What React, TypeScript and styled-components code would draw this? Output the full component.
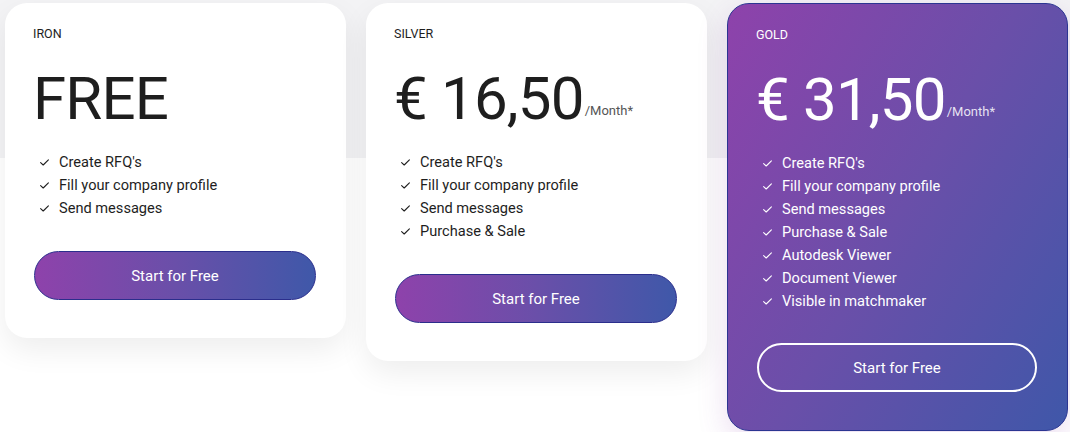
import React from "react";
import styled, { createGlobalStyle } from "styled-components";

const Global = createGlobalStyle`
  * { box-sizing: border-box; }
  html, body { margin: 0; padding: 0; }
  body {
    font-family: Roboto, "Liberation Sans", Arial, sans-serif;
    background: #fff;
  }
`;

const Page = styled.div`
  width: 1070px;
  height: 432px;
  overflow: hidden;
  padding: 3px 2px 0 5px;
  background: linear-gradient(to bottom, #f3f3f5 0, #f3f3f5 158px, #fff 158px);
`;

const Row = styled.div`
  display: flex;
  align-items: flex-start;
  gap: 20px;
`;

const Card = styled.div<{ $featured?: boolean }>`
  width: 341px;
  border-radius: 22px;
  padding: 24px 30px 38px 29px;
  background: ${(p) =>
    p.$featured
      ? "linear-gradient(120deg, #8e42ab 0%, #6a4fa9 50%, #3f57a9 100%)"
      : "#fff"};
  border: ${(p) => (p.$featured ? "1px solid #2c3592" : "none")};
  color: ${(p) => (p.$featured ? "#fff" : "#1e1e1e")};
  box-shadow: ${(p) =>
    p.$featured
      ? "0 10px 30px rgba(142, 68, 173, 0.18)"
      : "0 12px 30px rgba(0, 0, 0, 0.07)"};
`;

const Tier = styled.div`
  font-size: 12.5px;
  line-height: 14px;
  margin-left: -1px;
  text-transform: uppercase;
`;

const PriceLine = styled.div`
  display: flex;
  align-items: baseline;
  margin-top: 27px;
`;

const Price = styled.span`
  font-size: 60px;
  line-height: 62px;
  font-weight: 400;
  letter-spacing: -0.8px;
  margin-left: -1px;
`;

const Period = styled.span<{ $light?: boolean }>`
  font-size: 13px;
  margin-left: 1px;
  transform: translateY(-4px);
  color: ${(p) => (p.$light ? "rgba(255,255,255,0.85)" : "#555")};
`;

const Features = styled.ul`
  list-style: none;
  margin: 21px 0 0;
  padding: 0 0 0 6px;
`;

const Feature = styled.li`
  display: flex;
  align-items: center;
  gap: 10px;
  font-size: 14.6px;
  line-height: 23px;
`;

const Check = styled.svg`
  width: 9px;
  height: 7px;
  flex: none;
`;

const Button = styled.button<{ $outline?: boolean }>`
  display: block;
  width: 100%;
  height: 49px;
  margin-top: ${(p) => (p.$outline ? "30px" : "31px")};
  border-radius: 25px;
  font-family: inherit;
  font-size: 15px;
  color: #fff;
  cursor: pointer;
  background: ${(p) =>
    p.$outline
      ? "transparent"
      : "linear-gradient(90deg, #8e42ab 0%, #6a4fa9 50%, #3f58a9 100%)"};
  border: ${(p) => (p.$outline ? "2px solid #fff" : "1px solid #2b2e8c")};
`;

const CheckIcon = () => (
  <Check viewBox="0 0 9 7" fill="none">
    <polyline
      points="0.6,3.6 3.2,6 8.4,0.8"
      stroke="currentColor"
      strokeWidth="1.1"
      strokeLinecap="round"
      strokeLinejoin="round"
    />
  </Check>
);

type Plan = {
  tier: string;
  price: string;
  period?: boolean;
  featured?: boolean;
  features: string[];
};

const plans: Plan[] = [
  {
    tier: "Iron",
    price: "FREE",
    features: ["Create RFQ's", "Fill your company profile", "Send messages"],
  },
  {
    tier: "Silver",
    price: "€ 16,50",
    period: true,
    features: [
      "Create RFQ's",
      "Fill your company profile",
      "Send messages",
      "Purchase & Sale",
    ],
  },
  {
    tier: "Gold",
    price: "€ 31,50",
    period: true,
    featured: true,
    features: [
      "Create RFQ's",
      "Fill your company profile",
      "Send messages",
      "Purchase & Sale",
      "Autodesk Viewer",
      "Document Viewer",
      "Visible in matchmaker",
    ],
  },
];

export default function App() {
  return (
    <>
      <Global />
      <Page>
        <Row>
          {plans.map((p) => (
            <Card key={p.tier} $featured={p.featured}>
              <Tier>{p.tier}</Tier>
              <PriceLine>
                <Price>{p.price}</Price>
                {p.period && <Period $light={p.featured}>/Month*</Period>}
              </PriceLine>
              <Features>
                {p.features.map((f) => (
                  <Feature key={f}>
                    <CheckIcon />
                    {f}
                  </Feature>
                ))}
              </Features>
              <Button $outline={p.featured}>Start for Free</Button>
            </Card>
          ))}
        </Row>
      </Page>
    </>
  );
}
